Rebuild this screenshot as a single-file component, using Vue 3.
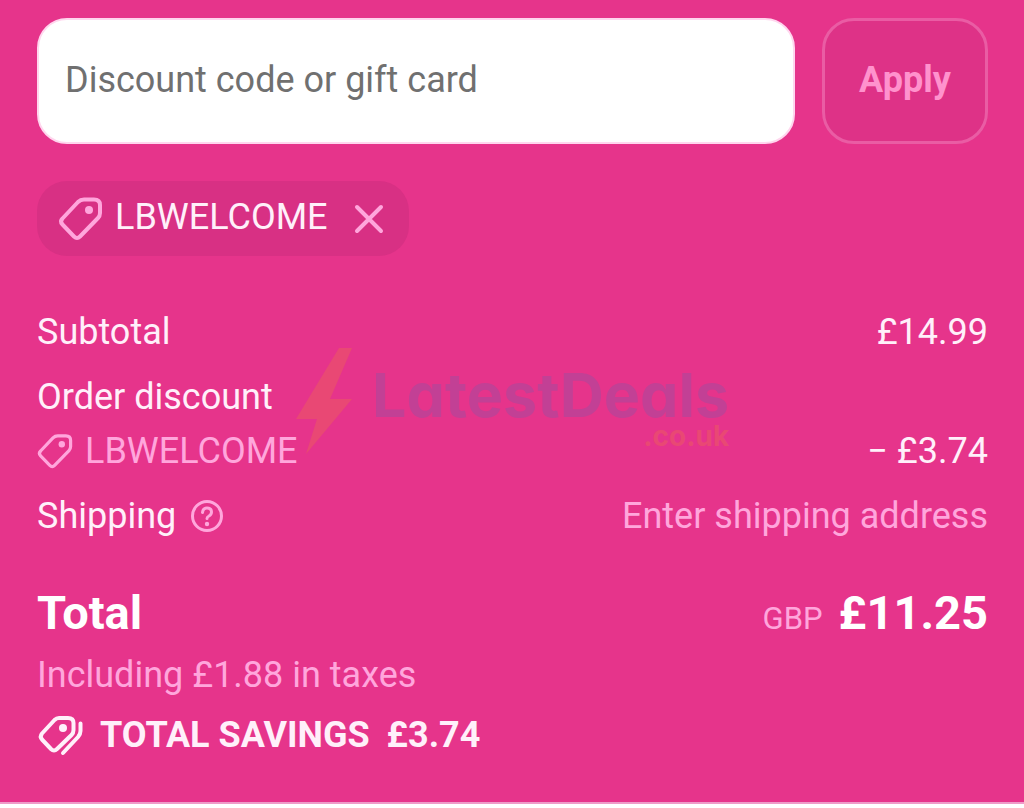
<script setup>
import { ref } from 'vue'

const code = ref('')
const discounts = ref(['LBWELCOME'])
const tagPath =
  'M26 3.500 H36 Q42 3.500 42 9 V17 Q42 20 40 22 L22 40.500 Q19 43.500 16 40.500 L4.500 28.500 Q1.500 25.500 4.500 22.500 L20 6 Q22.500 3.500 26 3.500 Z'

function removeDiscount(name) {
  discounts.value = discounts.value.filter((d) => d !== name)
}
</script>

<template>
  <main class="summary">
    <form class="code-form" @submit.prevent>
      <input v-model="code" class="code-input" type="text" aria-label="Discount code or gift card" placeholder="Discount code or gift card" />
      <button class="apply" type="submit" disabled>Apply</button>
    </form>

    <div class="chips">
      <div v-for="d in discounts" :key="d" class="chip">
        <svg class="chip-tag" viewBox="0 0 45 45" aria-hidden="true">
          <path :d="tagPath" class="stroke" />
          <circle cx="31" cy="14" r="4" class="dot" />
        </svg>
        <span>{{ d }}</span>
        <button class="remove" type="button" :aria-label="`Remove ${d}`" @click="removeDiscount(d)">
          <svg viewBox="0 0 30 30" aria-hidden="true"><path d="M3 3 L27 27 M27 3 L3 27" class="stroke" /></svg>
        </button>
      </div>
    </div>

    <section class="costs">
      <div class="row">
        <span>Subtotal</span>
        <span>£14.99</span>
      </div>
      <div class="group">
        <div class="row">Order discount</div>
        <div class="row discount">
          <span class="label muted">
            <svg class="small-tag" viewBox="0 0 45 45" aria-hidden="true">
              <path :d="tagPath" class="stroke" />
              <circle cx="31" cy="14" r="4" class="dot" />
            </svg>
            LBWELCOME
          </span>
          <span>− £3.74</span>
        </div>
      </div>
      <div class="row">
        <span class="label shipping">
          Shipping
          <button class="help" type="button" aria-label="Shipping help">
            <svg viewBox="0 0 34 34" aria-hidden="true">
              <circle cx="17" cy="17" r="14.500" class="stroke" />
              <path d="M12.500 13.500 Q13 9 17 9 Q21.500 9 21.500 13 Q21.500 15.500 19 17 Q17 18 17 19.500" class="stroke" />
              <circle cx="17" cy="25" r="2.200" class="dot" />
            </svg>
          </button>
        </span>
        <span class="muted">Enter shipping address</span>
      </div>

      <div class="watermark" aria-hidden="true">
        <svg class="bolt" viewBox="0 0 56 106">
          <path d="M43 0 H56 L34 51 H56 L10 106 L21 71 H0 Z" />
        </svg>
        <div class="brand">
          <span class="name">LatestDeals</span>
          <span class="domain">.co.uk</span>
        </div>
      </div>
    </section>

    <section class="total">
      <div class="row total-row">
        <strong>Total</strong>
        <span class="amount"><span class="currency">GBP</span><strong>£11.25</strong></span>
      </div>
      <div class="taxes muted">Including £1.88 in taxes</div>
      <div class="savings">
        <svg class="tags" viewBox="0 0 44 40" aria-hidden="true">
          <path d="M20 3 H29 Q34.500 3 34.500 8 V15 Q34.500 18 32.500 20 L18 34 Q15 37 12 34 L3 24.500 Q0.500 21.500 3 18.500 L15.500 5 Q17.500 3 20 3 Z" class="stroke" />
          <circle cx="24" cy="13" r="4" class="dot" />
          <path d="M41.500 8.500 V16 Q41.500 19 39 22 L24 38" class="stroke" />
        </svg>
        <span>TOTAL SAVINGS</span>
        <span>£3.74</span>
      </div>
    </section>
  </main>
</template>

<style>
body {
  margin: 0;
  background: #fff;
}
</style>

<style scoped>
.summary {
  padding: 18px 36px 45px 37px;
  border-bottom: 2px solid #ee9bc8;
  background: #e6348b;
  color: #fff0fa;
  font-family: Roboto, sans-serif;
  font-size: 36px;
  line-height: 44px;
}
.stroke {
  fill: none;
  stroke: currentColor;
  stroke-width: 4px;
  stroke-linecap: round;
  stroke-linejoin: round;
}
.dot {
  fill: currentColor;
}
svg {
  display: block;
  flex: none;
  overflow: visible;
}
button {
  font: inherit;
  cursor: pointer;
}
.muted {
  color: #ffa6dc;
}
.code-form {
  display: flex;
  gap: 27px;
}
.code-input {
  flex: 1;
  min-width: 0;
  height: 126px;
  box-sizing: border-box;
  padding: 0 26px 2px;
  border: 2px solid #ffd6ee;
  border-radius: 30px;
  background: #fff;
  color: #333;
  font: inherit;
}
.code-input::placeholder {
  color: #707070;
  opacity: 1;
}
.apply {
  width: 166px;
  box-sizing: border-box;
  padding: 0 0 2px;
  border: 3px solid #ea5ca4;
  border-radius: 32px;
  background: #de3287;
  color: #ff92cd;
  font-weight: 700;
}
.chips {
  display: flex;
  margin-top: 37px;
}
.chip {
  display: flex;
  align-items: center;
  height: 75px;
  box-sizing: border-box;
  padding: 0 25px 0 21px;
  border-radius: 30px;
  background: #d83084;
}
.chip span {
  margin: 0 26px 4px 12px;
}
.chip-tag {
  width: 45px;
  height: 45px;
  color: #ffa6dc;
}
.remove,
.help {
  padding: 0;
  border: 0;
  background: none;
  color: #ffa6dc;
}
.remove svg {
  width: 30px;
  height: 30px;
}
.costs {
  position: relative;
  display: flex;
  flex-direction: column;
  gap: 21px;
  margin-top: 54px;
}
.row {
  display: flex;
  justify-content: space-between;
}
.discount {
  margin-top: 10px;
}
.label {
  display: flex;
  align-items: center;
  gap: 12px;
}
.shipping {
  gap: 14px;
}
.small-tag {
  width: 36px;
  height: 36px;
}
.help svg {
  width: 34px;
  height: 34px;
}
.help .stroke {
  stroke-width: 3px;
}
.watermark {
  position: absolute;
  top: 38px;
  left: 259px;
  display: flex;
  gap: 20px;
  pointer-events: none;
}
.bolt {
  width: 56px;
  height: 106px;
  fill: #e94874;
}
.brand {
  display: flex;
  flex-direction: column;
  padding-top: 20px;
  font-family: Inter, sans-serif;
  font-weight: 700;
  font-feature-settings: "cv11";
}
.name {
  color: #c24095;
  font-size: 61px;
  line-height: 54px;
}
.domain {
  align-self: flex-end;
  color: #e94874;
  font-size: 28px;
  line-height: 28px;
}
.total {
  margin-top: 45px;
}
.total-row {
  font-size: 47px;
  line-height: 60px;
}
.total-row strong {
  color: #fff;
}
.amount {
  display: flex;
  align-items: baseline;
  gap: 16px;
}
.currency {
  color: #ffa6dc;
  font-size: 31px;
}
.taxes {
  margin-top: 4px;
}
.savings {
  display: flex;
  align-items: center;
  gap: 17px;
  margin-top: 16px;
  padding-left: 2px;
  font-weight: 700;
}
.tags {
  width: 44px;
  height: 40px;
}
</style>
